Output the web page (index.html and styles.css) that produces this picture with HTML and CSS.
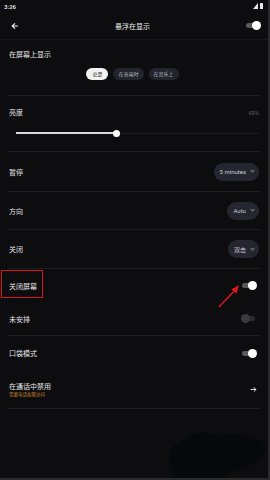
FILE: index.html
```html
<!DOCTYPE html>
<html lang="zh">
<head>
  <meta charset="UTF-8">
  <title>悬浮在显示</title>
  <link rel="stylesheet" href="styles.css">
</head>
<body>
<div id="screen">
  <div class="status">
    <span class="time">3:26</span>
    <span class="sig">
      <svg width="10" height="6" viewBox="0 0 10 6"><polygon points="0,6 5,0 5,6" fill="#e6e6e6"/><rect x="7" y="0" width="3" height="6" rx="0.6" fill="#e6e6e6"/></svg>
    </span>
  </div>

  <div class="header">
    <svg class="back" width="8" height="8" viewBox="0 0 8 8"><path d="M7 4H1.5M4 1.3L1.3 4L4 6.7" stroke="#eee" stroke-width="1.2" fill="none"/></svg>
    <span class="title">悬浮在显示</span>
    <span class="toggle on"></span>
  </div>

  <div class="sec-screen">
    <div class="label">在屏幕上显示</div>
    <ul class="chips">
      <li class="chip chip-active">总是</li>
      <li class="chip">在充电时</li>
      <li class="chip">在音乐上</li>
    </ul>
  </div>
  <div class="line"></div>

  <div class="sec-bright">
    <div class="row-top">
      <span class="label">亮度</span>
      <span class="pct">60%</span>
    </div>
    <div class="slider">
      <div class="fill"></div>
      <div class="thumb"></div>
      <div class="rest"></div>
    </div>
  </div>
  <div class="line"></div>

  <div class="row h40"><span class="label">暂停</span><span class="pill">5 minutes <i class="chev"></i></span></div>
  <div class="line"></div>
  <div class="row h37"><span class="label">方向</span><span class="pill">Auto <i class="chev"></i></span></div>
  <div class="line"></div>
  <div class="row h39"><span class="label">关闭</span><span class="pill">双击 <i class="chev"></i></span></div>
  <div class="line"></div>
  <div class="row h34"><span class="label">关闭屏幕</span><span class="toggle on"></span></div>
  <div class="row h34"><span class="label">未安排</span><span class="toggle off"></span></div>
  <div class="line"></div>
  <div class="row h35"><span class="label">口袋模式</span><span class="toggle on"></span></div>
  <div class="row h38">
    <div>
      <div class="label">在通话中禁用</div>
      <div class="sub">需要电话权限访问</div>
    </div>
    <svg class="go" width="7" height="7" viewBox="0 0 7 7"><path d="M0.5 3.5H6M3.8 1.3L6 3.5L3.8 5.7" stroke="#ddd" stroke-width="1" fill="none"/></svg>
  </div>
  <div class="line"></div>

  <div class="mark-box"></div>
  <svg class="mark-arrow" width="30" height="30" viewBox="0 0 30 30">
    <path d="M3 27L20 9" stroke="#e0161b" stroke-width="1.4"/>
    <polygon points="23,5 15.5,9.5 20.5,13.5" fill="#e0161b"/>
  </svg>
  <svg class="blob" width="100" height="52" viewBox="0 0 100 52">
    <path d="M22 8C30 2 42 4 50 8C62 6 80 6 92 12C100 18 98 28 88 34C78 40 60 44 48 52L12 52C6 46 -2 36 2 24C6 16 14 12 22 8Z" fill="#05090c"/>
  </svg>
</div>
</body>
</html>
```
FILE: styles.css
```css
html, body, div, ul, li, span {padding:0; margin:0;}
* {box-sizing:border-box;}
ul {list-style:none;}
body {background:#0d0d0f; font-family:"Noto Sans CJK SC", "Noto Sans", sans-serif; color:#e6e6e6;}

#screen {position:relative; width:270px; height:480px; background:#0d0d0f; border-right:2px solid #2a2a2c; border-bottom:2px solid #2a2a2c; overflow:hidden;}

.status {height:12px; display:flex; justify-content:space-between; align-items:center; padding:0 4px 0 4px;}
.time {font-size:6px; font-weight:bold; color:#ddd; font-family:"Roboto", sans-serif;}
.sig {display:flex; padding-right:1px;}

.header {height:28px; display:flex; align-items:center; justify-content:space-between; padding:0 9px 0 11px; border-bottom:1px solid #19191b;}
.title {font-size:7px; color:#eee;}
.back {display:block;}

.toggle {position:relative; display:inline-block; width:13px; height:5px; border-radius:3px; background:#5a5a5c;}
.toggle::after {content:""; position:absolute; top:-2px; width:9px; height:9px; border-radius:50%;}
.toggle.on::after {right:-2px; background:#fff;}
.toggle.off {background:#2c2c2e;}
.toggle.off::after {left:-1px; background:#3a3a3c;}

.label {font-size:7px; color:#e4e4e4; line-height:10px;}

.sec-screen {height:55px; padding:9px 9px 0 9px;}
.chips {display:flex; justify-content:center; gap:5px; margin-top:9px; padding-right:3px;}
.chip {height:12px; line-height:12px; padding:0 5px; border-radius:6px; font-size:5px; color:#b9b9c4; background:#24242c;}
.chip-active {background:#f2f2f2; color:#222; padding:0 6px;}

.line {height:1px; margin:0 8px; background:#1d1d20;}

.sec-bright {height:55px; padding:11px 9px 0 9px;}
.row-top {display:flex; justify-content:space-between; align-items:center;}
.pct {font-size:5px; color:#666;}
.slider {display:flex; align-items:center; margin:12px 0 0 7px; height:8px;}
.fill {width:99px; height:2px; background:#d8d8d8;}
.thumb {width:7px; height:7px; border-radius:50%; background:#fff; margin-left:-2px;}
.rest {flex:1; height:1px; background:#1b1b1e; margin-right:-1px;}

.row {display:flex; justify-content:space-between; align-items:center; padding:0 9px 0 9px;}
.h40 {height:39px;}
.h37 {height:37px;}
.h39 {height:38px;}
.h34 {height:33px;}
.h35 {height:34px;}
.h38 {height:38px;}
.row .toggle {margin-right:4px;}

.pill {display:flex; align-items:center; height:18px; padding:0 5px 0 6px; border-radius:9px; background:#262630; font-size:6px; color:#c9c9d2; font-family:"Roboto", "Noto Sans CJK SC", sans-serif;}
.chev {display:inline-block; width:3px; height:3px; border-right:1px solid #888; border-bottom:1px solid #888; transform:rotate(45deg); margin:-2px 0 0 5px;}

.sub {font-size:4.5px; color:#c8862b; line-height:7px;}
.go {margin-right:2px;}

.mark-box {position:absolute; left:1px; top:270px; width:42px; height:28px; border:1.5px solid #d8151a;}
.mark-arrow {position:absolute; left:216px; top:280px;}
.blob {position:absolute; left:168px; top:428px;}
```
